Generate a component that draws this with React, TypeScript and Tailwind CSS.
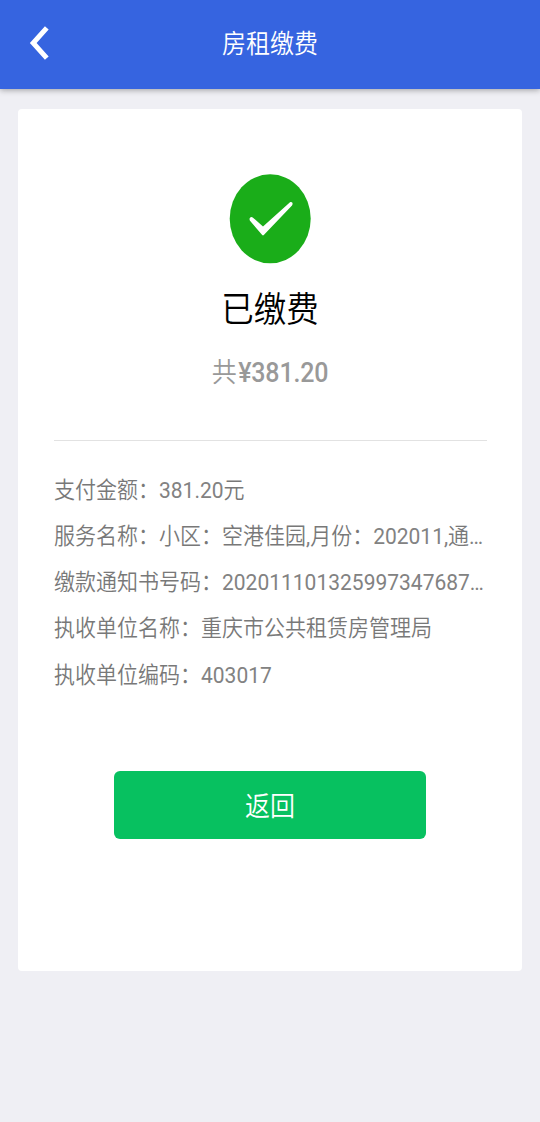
type Part = { text: string; latin?: boolean };

const rows: Part[][] = [
  [{ text: "支付金额：" }, { text: "381.20", latin: true }, { text: "元" }],
  [
    { text: "服务名称：小区：空港佳园" },
    { text: ",", latin: true },
    { text: "月份：" },
    { text: "202011,", latin: true },
    { text: "通" },
    { text: "…", latin: true },
  ],
  [{ text: "缴款通知书号码：" }, { text: "202011101325997347687…", latin: true }],
  [{ text: "执收单位名称：重庆市公共租赁房管理局" }],
  [{ text: "执收单位编码：" }, { text: "403017", latin: true }],
];

export default function App() {
  return (
    <div className="h-[1122px] w-[540px] overflow-hidden bg-[#efeff4] font-[Roboto,'Noto_Sans_CJK_SC',sans-serif]">
      <header className="relative z-10 grid h-[88.5px] grid-cols-[60px_1fr_60px] items-center bg-[#3664e0] text-white shadow-[0_1px_6px_rgba(0,0,0,0.35)]">
        <button aria-label="返回" className="pb-[2px] pl-[29px]">
          <svg width="21" height="36" viewBox="0 0 21 36" fill="none" stroke="currentColor" strokeWidth="5">
            <path d="M17.8 2.8 4.2 18 17.8 33.2" />
          </svg>
        </button>
        <h1 className="flex justify-center">
          <span className="scale-y-[1.09] text-[24px] leading-8 font-[350] whitespace-nowrap">房租缴费</span>
        </h1>
      </header>
      <main className="mx-[18px] mt-[20.5px] flex h-[862px] flex-col items-center rounded-[4px] bg-white px-9 pt-[65px]">
        <svg width="82" height="90" viewBox="0 0 82 90">
          <ellipse cx="41.2" cy="44.8" rx="40.5" ry="44.5" fill="#1aad19" />
          <path
            d="M22.5 43C20.5 43 20 45.5 21.2 47L33.2 61Q34 61.8 34.8 61L63 31.5C64.5 29.5 63 27 61 28.3L34 52.5 24 43.7Q23.2 43 22.5 43Z"
            fill="white"
          />
        </svg>
        <h2 className="mt-[22px] flex h-[48px] scale-y-[1.09] items-center text-[32.5px] font-[350] text-black">已缴费</h2>
        <p className="mt-[19px] flex h-[40px] scale-y-[1.09] items-center text-[25px] font-medium text-[#999999]">
          <span className="font-[350]">共</span>
          <span className="ml-[1.5px] tracking-[-0.15px]">¥381.20</span>
        </p>
        <hr className="mt-[47px] w-[433px] border-[#e2e2e2]" />
        <div className="mt-[26px] w-full text-[21px] text-[#787878]">
          {rows.map((row, index) => (
            <p key={index} className="h-[46.15px] scale-y-[1.09] leading-[46px] font-[350] whitespace-nowrap">
              {row.map((part, partIndex) => (
                <span key={partIndex} className={part.latin ? "font-normal text-[#828282]" : undefined}>{part.text}</span>
              ))}
            </p>
          ))}
        </div>
        <button className="mt-[73.25px] flex h-[68px] w-[312px] items-center justify-center rounded-[6px] bg-[#07c160] text-white">
          <span className="mt-[3px] scale-y-[1.09] text-[25px] font-[350]">返回</span>
        </button>
      </main>
    </div>
  );
}
